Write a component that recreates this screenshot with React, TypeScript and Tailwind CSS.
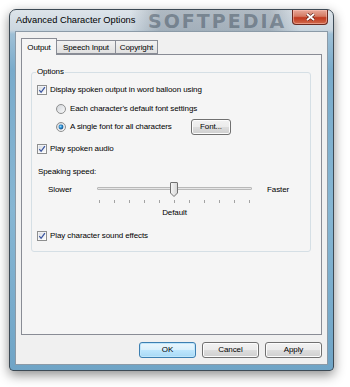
import React from "react";

const font = { fontFamily: '"Liberation Sans", Arial, sans-serif' };

function CheckBox() {
  return (
    <svg width="10" height="10" viewBox="0 0 10 10" className="shrink-0">
      <defs>
        <linearGradient id="cbg" x1="0" y1="0" x2="1" y2="1">
          <stop offset="0" stopColor="#d9dde3" />
          <stop offset="1" stopColor="#fbfbfb" />
        </linearGradient>
      </defs>
      <rect x="0.5" y="0.5" width="9" height="9" fill="#ffffff" stroke="#8e8f8f" />
      <rect x="1.5" y="1.5" width="7" height="7" fill="url(#cbg)" />
      <path d="M2.3 5.2 L4.1 7.3 L7.9 2.2" fill="none" stroke="#3b56a0" strokeWidth="1.3" />
    </svg>
  );
}

function Radio({ checked }: { checked?: boolean }) {
  return (
    <svg width="10" height="10" viewBox="0 0 10 10" className="shrink-0">
      <defs>
        <linearGradient id="rbg" x1="0" y1="0" x2="1" y2="1">
          <stop offset="0" stopColor="#d0d4d9" />
          <stop offset="1" stopColor="#fafafa" />
        </linearGradient>
        <radialGradient id="rdot" cx="0.4" cy="0.4" r="0.6">
          <stop offset="0" stopColor="#8fd6ff" />
          <stop offset="0.6" stopColor="#1d7fc4" />
          <stop offset="1" stopColor="#1a4d80" />
        </radialGradient>
      </defs>
      <circle cx="5" cy="5" r="4.5" fill="url(#rbg)" stroke="#8e8f8f" />
      {checked && <circle cx="5" cy="5" r="2.4" fill="url(#rdot)" />}
    </svg>
  );
}

function Thumb() {
  return (
    <svg width="8" height="15" viewBox="0 0 8 15">
      <defs>
        <linearGradient id="tg" x1="0" y1="0" x2="1" y2="0">
          <stop offset="0" stopColor="#f6f6f6" />
          <stop offset="1" stopColor="#d6d6d6" />
        </linearGradient>
      </defs>
      <path d="M1 0.5 H7 Q7.5 0.5 7.5 1 V11 L4 14.5 L0.5 11 V1 Q0.5 0.5 1 0.5 Z" fill="url(#tg)" stroke="#707070" />
    </svg>
  );
}

function VButton({ label, def, w }: { label: string; def?: boolean; w: string }) {
  return (
    <div
      className={
        "flex h-[16px] items-center justify-center rounded-[3px] border text-[8px] tracking-[-0.1px] text-black " +
        w +
        " " +
        (def
          ? "border-[#3c7fb1] bg-[linear-gradient(#eaf6fd_0%,#d9f0fc_50%,#bee6fd_51%,#a7d9f5_100%)] shadow-[inset_0_0_0_1px_#bfe6fb]"
          : "border-[#707070] bg-[linear-gradient(#f2f2f2_0%,#ebebeb_50%,#dddddd_51%,#cfcfcf_100%)] shadow-[inset_0_0_0_1px_#fcfcfc]")
      }
    >
      {label}
    </div>
  );
}

export default function App() {
  const ticks = Array.from({ length: 11 });
  return (
    <div className="h-[387px] w-[350px] overflow-hidden bg-white pl-[9px] pt-[9px]" style={font}>
      <div className="flex h-[362px] w-[325px] flex-col rounded-t-[7px] rounded-b-[4px] border border-[#3d4a55] bg-[linear-gradient(180deg,#dde4ea_0px,#cbd6df_20px,#9fc0d6_24px,#79abcb_60px,#86b6d3_200px,#6fa4c6_362px)] shadow-[0_4px_12px_rgba(0,0,0,0.45)]">
        {/* title bar */}
        <div className="relative flex h-[21px] items-start justify-between bg-[linear-gradient(90deg,transparent_0px,transparent_120px,rgba(90,105,120,0.35)_150px,rgba(90,105,120,0.35)_260px,transparent_290px)]">
          <div className="pl-[6px] pt-[5px] text-[9.3px] leading-[11px] text-black">
            Advanced Character Options
          </div>
          <div
            className="absolute left-[138px] top-[0px] text-[19px] font-bold leading-[22px] tracking-[2px] text-[rgba(55,70,85,0.45)]"
            style={{ fontFamily: '"DejaVu Sans", sans-serif' }}
          >
            SOFTPEDIA
          </div>
          <div className="relative z-10 mr-[5px] flex h-[15px] w-[36px] items-center justify-center rounded-b-[4px] border border-t-0 border-[#6b2a20] bg-[linear-gradient(#e8a99a_0%,#d47a63_45%,#c0391f_55%,#d06a4c_100%)] shadow-[inset_0_0_0_1px_rgba(255,200,190,0.5)]">
            <svg width="9" height="8" viewBox="0 0 9 8">
              <path d="M1 1 L8 7 M8 1 L1 7" stroke="#5a1c12" strokeWidth="3" />
              <path d="M1 1 L8 7 M8 1 L1 7" stroke="#ffffff" strokeWidth="1.8" />
            </svg>
          </div>
        </div>

        {/* client area */}
        <div className="mx-[5px] flex h-[334px] flex-col border border-[#8b9aa7] bg-[#f0f0f0] px-[5px] pt-[6px]">
          {/* tabs */}
          <div className="flex h-[16px] items-end text-[8px] leading-[11px] tracking-[-0.1px] text-black">
            <div className="relative z-10 -mb-px flex h-[17px] w-[36px] items-start justify-center border border-b-0 border-[#898c95] bg-[#f5f5f5] pt-[3px]">
              Output
            </div>
            <div className="flex h-[14px] w-[59px] items-start justify-center border border-l-0 border-[#898c95] bg-[linear-gradient(#f2f2f2,#e0e0e0)] pt-[1px]">
              Speech Input
            </div>
            <div className="flex h-[14px] w-[42px] items-start justify-center border border-l-0 border-[#898c95] bg-[linear-gradient(#f2f2f2,#e0e0e0)] pt-[1px]">
              Copyright
            </div>
          </div>

          {/* panel */}
          <div className="h-[281px] border border-[#898c95] bg-[#f5f5f5] pt-[11px]">
            <fieldset className="ml-[9px] w-[280px] rounded-[3px] border border-[#d5dfe5] pb-[6px] text-[8px] leading-[12px] tracking-[-0.1px] text-black">
              <legend className="ml-[4px] px-[1px] leading-[12px]">Options</legend>

              <div className="mt-[3px] flex h-[18px] items-center gap-[3px] pl-[5px]">
                <CheckBox />
                <span>Display spoken output in word balloon using</span>
              </div>
              <div className="mt-[1px] flex h-[18px] items-center gap-[4px] pl-[24px]">
                <Radio />
                <span>Each character's default font settings</span>
              </div>
              <div className="flex h-[18px] items-center gap-[4px] pl-[24px]">
                <Radio checked />
                <span className="w-[117px]">A single font for all characters</span>
                <VButton label="Font..." w="w-[40px]" />
              </div>
              <div className="mt-[4px] flex h-[18px] items-center gap-[3px] pl-[5px]">
                <CheckBox />
                <span>Play spoken audio</span>
              </div>
              <div className="mt-[6px] flex h-[16px] items-center pl-[6px]">Speaking speed:</div>

              <div className="mt-[1px] flex h-[25px] items-start">
                <span className="ml-[16px] mt-[3px] w-[49px]">Slower</span>
                <div className="relative flex h-[25px] w-[155px] flex-col">
                  <div className="mt-[6px] h-[3px] rounded-[1px] border border-[#b9b9b9] bg-[#e6e6e6]" />
                  <div className="mt-[10px] flex h-[3px] justify-between px-[2px]">
                    {ticks.map((_, i) => (
                      <div key={i} className="h-[3px] w-[1px] bg-[#a3a3a3]" />
                    ))}
                  </div>
                  <div className="absolute left-[73px] top-[1px]">
                    <Thumb />
                  </div>
                </div>
                <span className="ml-[15px] mt-[3px]">Faster</span>
              </div>
              <div className="ml-[65px] flex h-[14px] w-[155px] items-center justify-center">Default</div>

              <div className="mt-[7px] flex h-[18px] items-center gap-[3px] pl-[5px]">
                <CheckBox />
                <span>Play character sound effects</span>
              </div>
            </fieldset>
          </div>

          {/* buttons */}
          <div className="mt-[7px] flex justify-end gap-[6px]">
            <VButton label="OK" def w="w-[57px]" />
            <VButton label="Cancel" w="w-[57px]" />
            <VButton label="Apply" w="w-[57px]" />
          </div>
        </div>
      </div>
    </div>
  );
}
